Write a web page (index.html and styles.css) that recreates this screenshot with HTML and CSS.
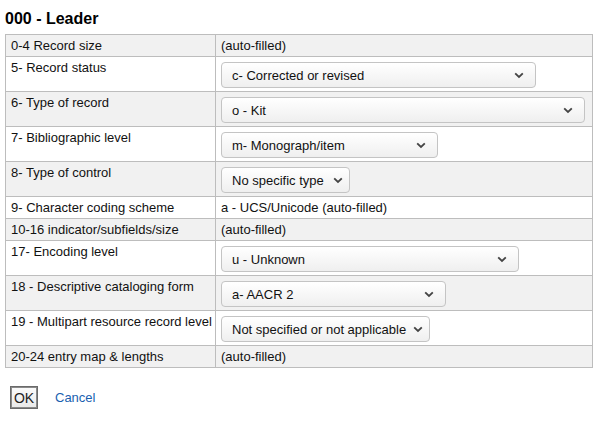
FILE: index.html
```html
<!DOCTYPE html>
<html>
<head>
<meta charset="utf-8">
<link rel="stylesheet" href="styles.css">
</head>
<body>
<h3 class="title">000 - Leader</h3>
<table class="leader">
  <tr class="odd"><td class="label">0-4 Record size</td><td class="value">(auto-filled)</td></tr>
  <tr><td class="label">5- Record status</td><td class="value"><div class="select w315"><span>c- Corrected or revised</span><svg class="chev" width="10" height="7" viewBox="0 0 10 7"><path d="M1.2 1.3 5 5 8.8 1.3" fill="none" stroke="#444" stroke-width="1.8"/></svg></div></td></tr>
  <tr class="odd"><td class="label">6- Type of record</td><td class="value"><div class="select w364"><span>o - Kit</span><svg class="chev" width="10" height="7" viewBox="0 0 10 7"><path d="M1.2 1.3 5 5 8.8 1.3" fill="none" stroke="#444" stroke-width="1.8"/></svg></div></td></tr>
  <tr><td class="label">7- Bibliographic level</td><td class="value"><div class="select w217"><span>m- Monograph/item</span><svg class="chev" width="10" height="7" viewBox="0 0 10 7"><path d="M1.2 1.3 5 5 8.8 1.3" fill="none" stroke="#444" stroke-width="1.8"/></svg></div></td></tr>
  <tr class="odd"><td class="label">8- Type of control</td><td class="value"><div class="select w129"><span>No specific type</span><svg class="chev" width="10" height="7" viewBox="0 0 10 7"><path d="M1.2 1.3 5 5 8.8 1.3" fill="none" stroke="#444" stroke-width="1.8"/></svg></div></td></tr>
  <tr><td class="label">9- Character coding scheme</td><td class="value">a - UCS/Unicode (auto-filled)</td></tr>
  <tr class="odd"><td class="label">10-16 indicator/subfields/size</td><td class="value">(auto-filled)</td></tr>
  <tr><td class="label">17- Encoding level</td><td class="value"><div class="select w298"><span>u - Unknown</span><svg class="chev" width="10" height="7" viewBox="0 0 10 7"><path d="M1.2 1.3 5 5 8.8 1.3" fill="none" stroke="#444" stroke-width="1.8"/></svg></div></td></tr>
  <tr class="odd"><td class="label">18 - Descriptive cataloging form</td><td class="value"><div class="select w225"><span>a- AACR 2</span><svg class="chev" width="10" height="7" viewBox="0 0 10 7"><path d="M1.2 1.3 5 5 8.8 1.3" fill="none" stroke="#444" stroke-width="1.8"/></svg></div></td></tr>
  <tr><td class="label">19 - Multipart resource record level</td><td class="value"><div class="select w209"><span>Not specified or not applicable</span><svg class="chev" width="10" height="7" viewBox="0 0 10 7"><path d="M1.2 1.3 5 5 8.8 1.3" fill="none" stroke="#444" stroke-width="1.8"/></svg></div></td></tr>
  <tr class="odd"><td class="label">20-24 entry map &amp; lengths</td><td class="value">(auto-filled)</td></tr>
</table>
<div class="actions">
  <button class="ok" type="button">OK</button>
  <a class="cancel" href="#">Cancel</a>
</div>
</body>
</html>
```
FILE: styles.css
```css
html, body {
  margin: 0;
  padding: 0;
  background: #fff;
}
body {
  padding: 0 5px;
  font-family: "Liberation Sans", Arial, sans-serif;
  font-size: 13px;
  color: #111;
}
.title {
  margin: 0;
  padding-top: 9px;
  height: 25px;
  font-size: 16px;
  font-weight: bold;
  line-height: 19px;
  color: #000;
}
.leader {
  border-collapse: collapse;
  width: 588px;
  table-layout: fixed;
}
.leader td {
  border: 1px solid #bdbdbd;
  padding: 3px 5px;
  line-height: 15px;
  vertical-align: top;
  white-space: nowrap;
}
.leader td.label {
  width: 204px;
  padding-right: 0;
  overflow: visible;
}
.leader tr.odd td {
  background: #f1f1f1;
}
.select {
  box-sizing: border-box;
  display: flex;
  align-items: center;
  justify-content: space-between;
  height: 26px;
  margin: 2px 0 0;
  padding: 0 11px 0 10px;
  border: 1px solid #c4c4c4;
  border-radius: 4px;
  background: linear-gradient(#ffffff, #efefef);
  color: #111;
  white-space: nowrap;
}
.chev { flex: none; }
.w315 { width: 315px; }
.w364 { width: 364px; }
.w217 { width: 217px; }
.w129 { width: 129px; padding-right: 6px; }
.w298 { width: 298px; }
.w225 { width: 225px; }
.w209 { width: 209px; padding-right: 6px; }
.actions {
  display: flex;
  align-items: center;
  gap: 17px;
  margin-top: 18px;
  padding-left: 5px;
}
.ok {
  box-sizing: border-box;
  width: 28px;
  height: 23px;
  padding: 0;
  margin: 0;
  border: 1px solid #6a6a6a;
  box-shadow: inset 0 0 0 1px #8a8a8a;
  border-radius: 0;
  background: linear-gradient(#fbfbfb, #e9e9e9);
  font-family: "Liberation Sans", Arial, sans-serif;
  font-size: 14px;
  color: #222;
}
.cancel {
  color: #1a5fb0;
  text-decoration: none;
  font-size: 13px;
}
```
